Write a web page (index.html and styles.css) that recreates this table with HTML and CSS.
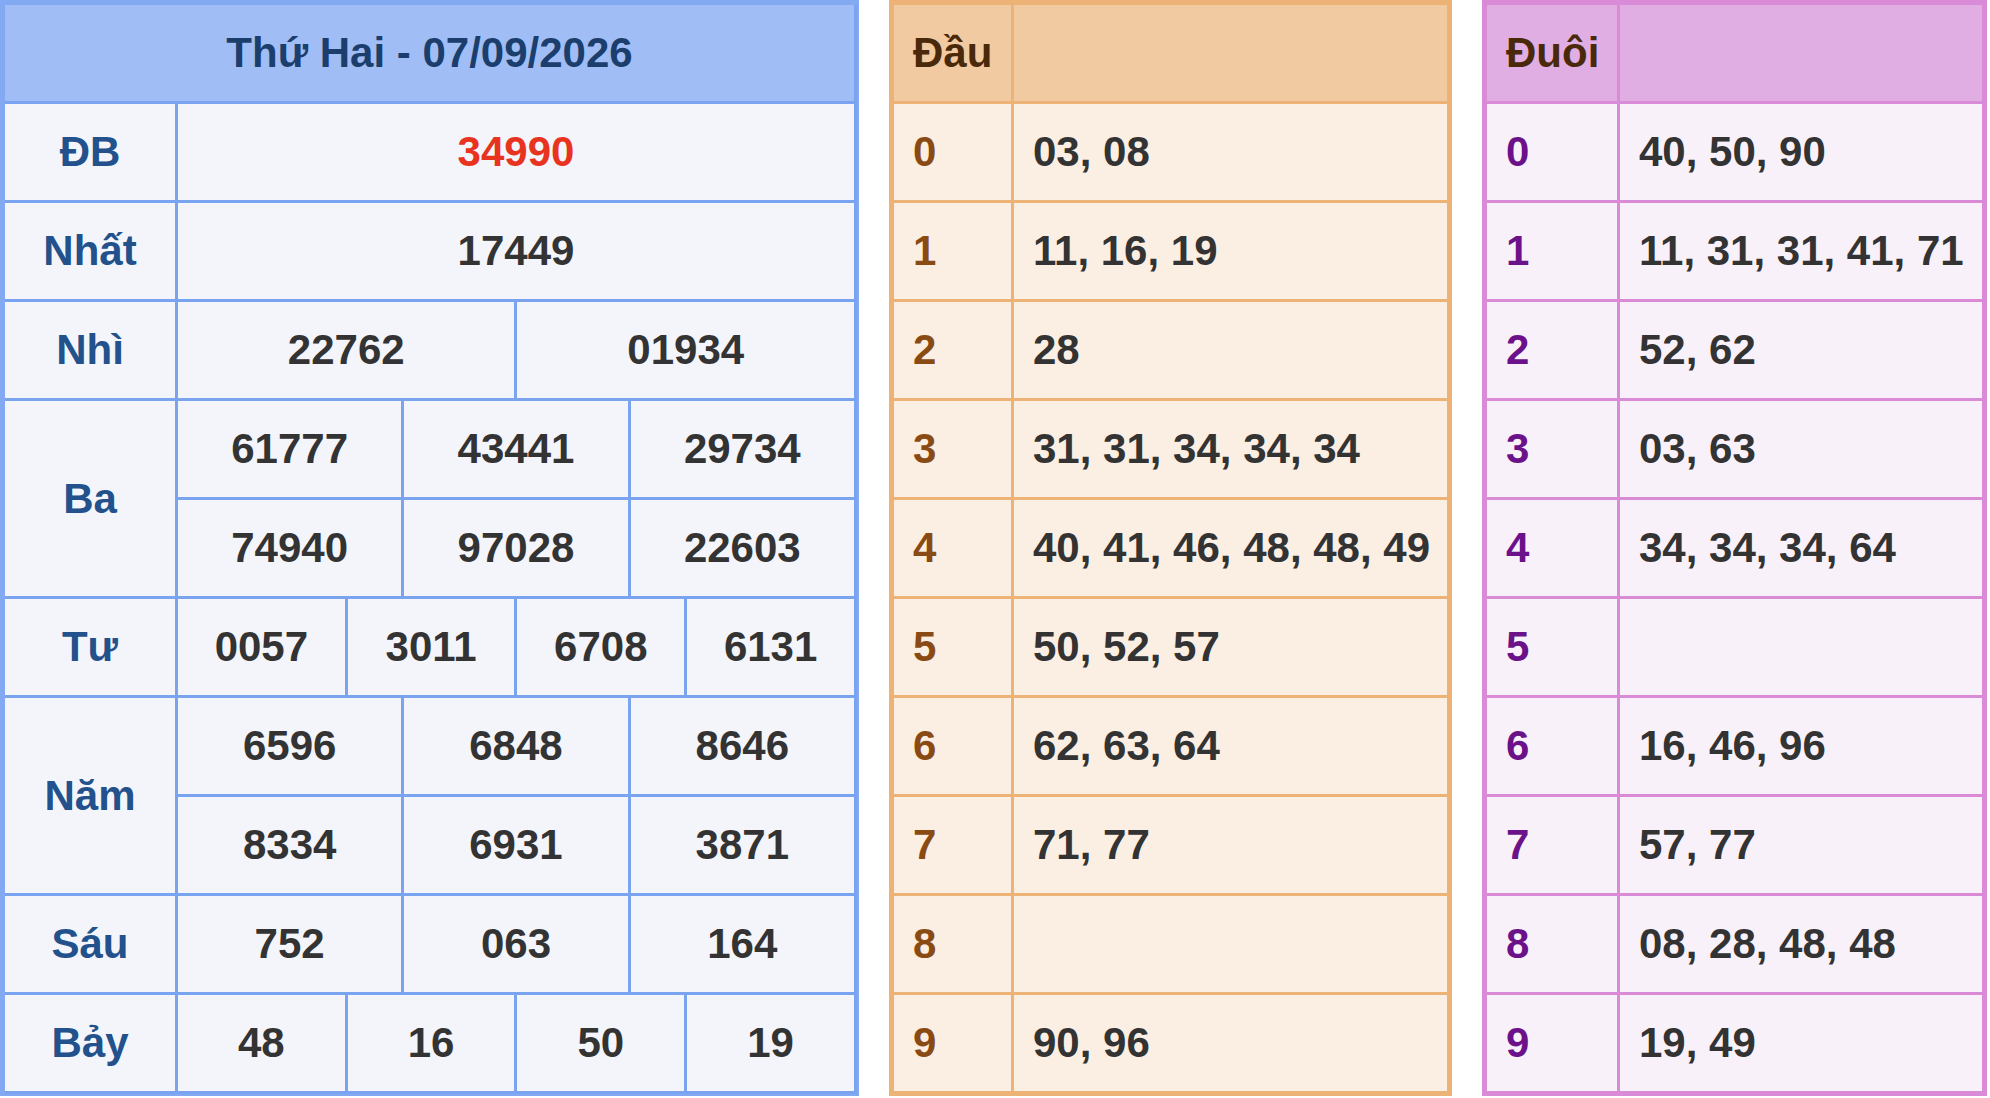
FILE: index.html
```html
<!DOCTYPE html>
<html lang="vi">
<head>
<meta charset="utf-8">
<title>Kết quả xổ số - Thứ Hai 07/09/2026</title>
<link rel="stylesheet" href="styles.css">
</head>
<body>
<div class="wrap">
  <table class="kq">
    <colgroup>
      <col class="c-label">
      <col><col><col><col><col><col><col><col><col><col><col><col>
    </colgroup>
    <thead>
      <tr><th colspan="13" class="title">Thứ Hai - 07/09/2026</th></tr>
    </thead>
    <tbody>
      <tr><td class="lbl">ĐB</td><td colspan="12" class="num red">34990</td></tr>
      <tr><td class="lbl">Nhất</td><td colspan="12" class="num">17449</td></tr>
      <tr><td class="lbl">Nhì</td><td colspan="6" class="num">22762</td><td colspan="6" class="num">01934</td></tr>
      <tr><td class="lbl" rowspan="2">Ba</td><td colspan="4" class="num">61777</td><td colspan="4" class="num">43441</td><td colspan="4" class="num">29734</td></tr>
      <tr><td colspan="4" class="num">74940</td><td colspan="4" class="num">97028</td><td colspan="4" class="num">22603</td></tr>
      <tr><td class="lbl">Tư</td><td colspan="3" class="num">0057</td><td colspan="3" class="num">3011</td><td colspan="3" class="num">6708</td><td colspan="3" class="num">6131</td></tr>
      <tr><td class="lbl" rowspan="2">Năm</td><td colspan="4" class="num">6596</td><td colspan="4" class="num">6848</td><td colspan="4" class="num">8646</td></tr>
      <tr><td colspan="4" class="num">8334</td><td colspan="4" class="num">6931</td><td colspan="4" class="num">3871</td></tr>
      <tr><td class="lbl">Sáu</td><td colspan="4" class="num">752</td><td colspan="4" class="num">063</td><td colspan="4" class="num">164</td></tr>
      <tr><td class="lbl">Bảy</td><td colspan="3" class="num">48</td><td colspan="3" class="num">16</td><td colspan="3" class="num">50</td><td colspan="3" class="num">19</td></tr>
    </tbody>
  </table>

  <table class="lt dau">
    <colgroup><col class="c-dau"><col></colgroup>
    <thead><tr><th>Đầu</th><th></th></tr></thead>
    <tbody>
      <tr><td class="d">0</td><td class="v">03, 08</td></tr>
      <tr><td class="d">1</td><td class="v">11, 16, 19</td></tr>
      <tr><td class="d">2</td><td class="v">28</td></tr>
      <tr><td class="d">3</td><td class="v">31, 31, 34, 34, 34</td></tr>
      <tr><td class="d">4</td><td class="v">40, 41, 46, 48, 48, 49</td></tr>
      <tr><td class="d">5</td><td class="v">50, 52, 57</td></tr>
      <tr><td class="d">6</td><td class="v">62, 63, 64</td></tr>
      <tr><td class="d">7</td><td class="v">71, 77</td></tr>
      <tr><td class="d">8</td><td class="v"></td></tr>
      <tr><td class="d">9</td><td class="v">90, 96</td></tr>
    </tbody>
  </table>

  <table class="lt duoi">
    <colgroup><col class="c-duoi"><col></colgroup>
    <thead><tr><th>Đuôi</th><th></th></tr></thead>
    <tbody>
      <tr><td class="d">0</td><td class="v">40, 50, 90</td></tr>
      <tr><td class="d">1</td><td class="v">11, 31, 31, 41, 71</td></tr>
      <tr><td class="d">2</td><td class="v">52, 62</td></tr>
      <tr><td class="d">3</td><td class="v">03, 63</td></tr>
      <tr><td class="d">4</td><td class="v">34, 34, 34, 64</td></tr>
      <tr><td class="d">5</td><td class="v"></td></tr>
      <tr><td class="d">6</td><td class="v">16, 46, 96</td></tr>
      <tr><td class="d">7</td><td class="v">57, 77</td></tr>
      <tr><td class="d">8</td><td class="v">08, 28, 48, 48</td></tr>
      <tr><td class="d">9</td><td class="v">19, 49</td></tr>
    </tbody>
  </table>
</div>
</body>
</html>
```

FILE: styles.css
```css
* { box-sizing: border-box; }

html, body {
  margin: 0;
  padding: 0;
  background: #ffffff;
}

body {
  font-family: "Liberation Sans", Arial, sans-serif;
  font-weight: bold;
  font-size: 42px;
  color: #333333;
}

.wrap {
  display: flex;
  align-items: flex-start;
  gap: 30px;
}

table {
  border-collapse: separate;
  border-spacing: 0;
  table-layout: fixed;
  border-style: solid;
  border-width: 5px 2px 2px 5px;
}

th, td {
  padding: 0;
  height: 99px;
  border-style: solid;
  border-width: 0 3px 3px 0;
  vertical-align: middle;
  font-weight: bold;
  white-space: nowrap;
}

thead th { height: 99px; }

/* Main results table */
.kq {
  width: 859px;
  border-color: #84a9f3;
  background: #f3f5fa;
}
.kq th, .kq td { border-color: #7aa3f0; }
.kq .c-label { width: 173px; }
.kq .title {
  background: #a0bef5;
  color: #1b3e6d;
  text-align: center;
}
.kq .lbl {
  color: #22518b;
  text-align: center;
}
.kq .num {
  text-align: center;
  color: #333333;
}
.kq .red { color: #e8331f; }

/* Loto tables */
.lt th, .lt td {
  text-align: left;
  padding-left: 19px;
}
.lt th { color: #4a290b; }
.lt .v { color: #333333; }

.dau {
  width: 563px;
  border-color: #edb275;
  background: #fbeee3;
}
.dau th, .dau td { border-color: #edb275; }
.dau .c-dau { width: 120px; }
.dau th { background: #f2caa1; }
.dau .d { color: #8a4a13; }

.duoi {
  width: 505px;
  border-color: #d98bd7;
  background: #f9f1fa;
}
.duoi th, .duoi td { border-color: #d98bd7; }
.duoi .c-duoi { width: 133px; }
.duoi th { background: #e0aee3; }
.duoi .d { color: #6b1189; }
```
